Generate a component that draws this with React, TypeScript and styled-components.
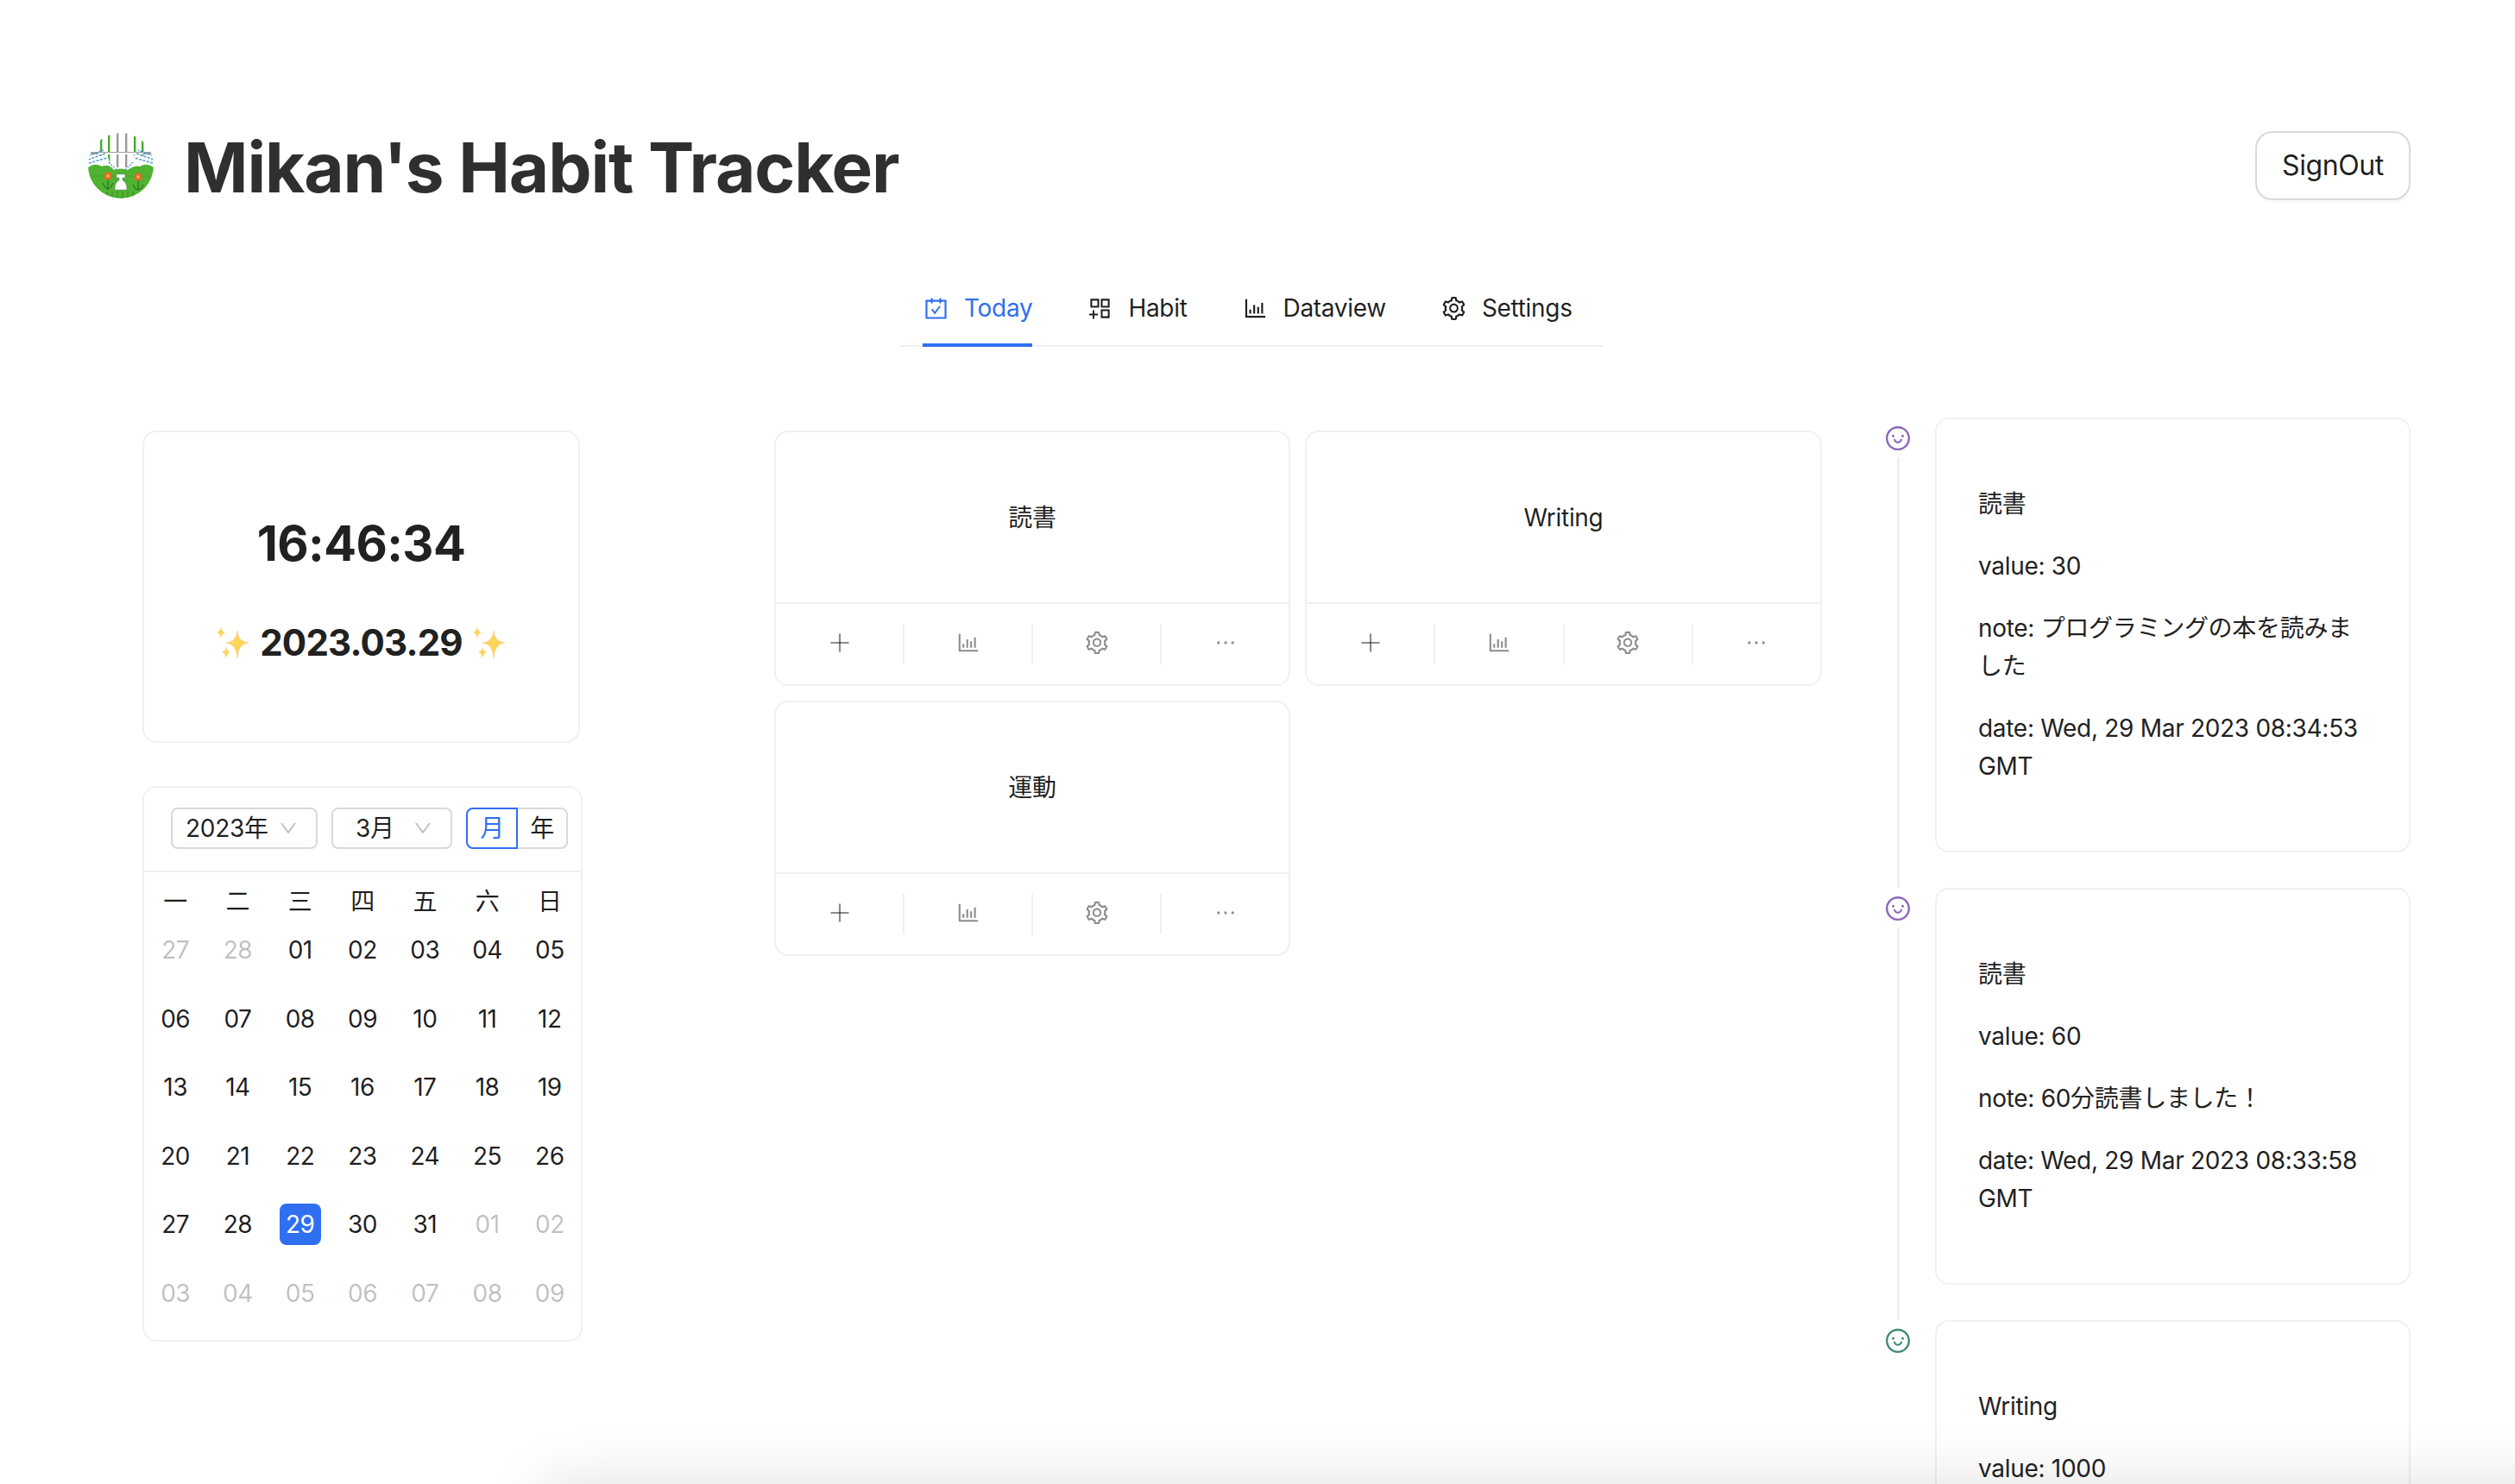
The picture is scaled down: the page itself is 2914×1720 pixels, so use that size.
import React from "react";
import styled, { createGlobalStyle } from "styled-components";
import {
  AiOutlineCarryOut,
  AiOutlineAppstoreAdd,
  AiOutlineBarChart,
  AiOutlineSetting,
  AiOutlineSmile,
  AiOutlinePlus,
  AiOutlineEllipsis,
  AiOutlineDown,
} from "react-icons/ai";

const Global = createGlobalStyle`
  html, body { margin: 0; padding: 0; height: 1720px; overflow: hidden; background: #fff; }
  * { box-sizing: border-box; }
  body {
    font-family: Inter, "Noto Sans CJK JP", "Noto Sans", sans-serif;
    font-size: 28px;
    line-height: 44px;
    letter-spacing: -0.3px;
    color: rgba(0, 0, 0, 0.88);
  }
`;

const BLUE = "#2f6ff2";
const LINE = "#f0f0f0";

const Page = styled.div`
  width: 2914px;
  height: 1720px;
  overflow: hidden;
`;
const Header = styled.header`
  display: flex;
  align-items: center;
  justify-content: space-between;
  padding: 152px 121px 0 102px;
`;
const Brand = styled.div`
  display: flex;
  align-items: center;
  gap: 35px;
`;
const Title = styled.h1`
  margin: 4px 0 0;
  font-size: 80px;
  line-height: 76px;
  font-weight: 700;
  letter-spacing: -1.15px;
  color: #2e3030;
  white-space: nowrap;
`;
const SignOut = styled.button`
  width: 180px;
  height: 80px;
  background: #fff;
  border: 2px solid #d9d9d9;
  border-radius: 20px;
  box-shadow: 0 4px 0 rgba(0, 0, 0, 0.02);
  font: inherit;
  font-size: 32px;
  letter-spacing: -0.4px;
  color: rgba(0, 0, 0, 0.88);
`;
const TabsRow = styled.div`
  display: flex;
  justify-content: center;
  padding: 0 121px 0 106px;
  margin-top: 79px;
`;
const TabsNav = styled.nav`
  display: flex;
  gap: 63px;
  width: 815px;
  padding-left: 27px;
  border-bottom: 2px solid ${LINE};
`;
const Tab = styled.div<{ $active?: boolean }>`
  position: relative;
  display: flex;
  align-items: center;
  gap: 17px;
  padding: 24px 0 21px;
  white-space: nowrap;
  color: ${(p) => (p.$active ? BLUE : "rgba(0,0,0,0.88)")};
  svg { font-size: 31px; }
  ${(p) =>
    p.$active &&
    `&::after { content: ""; position: absolute; left: 0; right: 0; bottom: -2px; height: 4px; background: ${BLUE}; }`}
`;
const Main = styled.main`
  display: flex;
  align-items: flex-start;
  margin-top: 82px;
  padding: 0 121px 0 165px;
`;
const LeftCol = styled.section`
  width: 510px;
  flex: none;
  margin-top: 15px;
`;
const ClockCard = styled.div`
  width: 507px;
  height: 362px;
  border: 2px solid ${LINE};
  border-radius: 16px;
  padding-top: 95px;
  text-align: center;
  color: #212121;
`;
const Time = styled.div`
  font-size: 56px;
  line-height: 68px;
  font-weight: 700;
  letter-spacing: -0.6px;
`;
const DateLine = styled.div`
  margin-top: 51px;
  display: flex;
  align-items: center;
  justify-content: center;
  gap: 12px;
  font-size: 42px;
  line-height: 60px;
  font-weight: 700;
  letter-spacing: -0.8px;
`;
const Calendar = styled.div`
  margin-top: 50px;
  height: 644px;
  border: 2px solid ${LINE};
  border-radius: 16px;
  font-family: Inter, "Noto Sans CJK SC", sans-serif;
`;
const CalHead = styled.div`
  display: flex;
  justify-content: flex-end;
  gap: 16px;
  height: 98px;
  padding: 23px 15px 0 0;
  border-bottom: 2px solid ${LINE};
`;
const Select = styled.div<{ $w: number; $center?: boolean }>`
  width: ${(p) => p.$w}px;
  height: 48px;
  display: flex;
  align-items: center;
  justify-content: space-between;
  padding: 0 20px 0 ${(p) => (p.$center ? 26 : 15)}px;
  border: 2px solid #d9d9d9;
  border-radius: 8px;
  line-height: 44px;
  svg { font-size: 24px; color: rgba(0, 0, 0, 0.25); }
`;
const Radio = styled.div`
  display: flex;
  height: 48px;
`;
const RadioOpt = styled.div<{ $on?: boolean }>`
  width: ${(p) => (p.$on ? 60 : 58)}px;
  text-align: center;
  line-height: 44px;
  border: 2px solid ${(p) => (p.$on ? BLUE : "#d9d9d9")};
  border-left-width: ${(p) => (p.$on ? 2 : 0)}px;
  border-radius: ${(p) => (p.$on ? "8px 0 0 8px" : "0 8px 8px 0")};
  color: ${(p) => (p.$on ? BLUE : "rgba(0,0,0,0.88)")};
`;
const WeekRow = styled.div`
  display: grid;
  grid-template-columns: repeat(7, 1fr);
  height: 66px;
  padding-top: 12px;
  text-align: center;
`;
const DateGrid = styled.div`
  display: grid;
  grid-template-columns: repeat(7, 1fr);
  grid-auto-rows: 79.5px;
`;
const DateCell = styled.div`
  display: flex;
  justify-content: center;
  align-items: flex-start;
`;
const DateNum = styled.span<{ $muted?: boolean; $sel?: boolean }>`
  width: 48px;
  height: 48px;
  line-height: 48px;
  text-align: center;
  border-radius: 8px;
  letter-spacing: -0.5px;
  background: ${(p) => (p.$sel ? BLUE : "transparent")};
  color: ${(p) => (p.$sel ? "#fff" : p.$muted ? "rgba(0,0,0,0.25)" : "rgba(0,0,0,0.88)")};
`;
const Habits = styled.section`
  flex: none;
  width: 1214px;
  margin: 15px 0 0 222px;
  display: grid;
  grid-template-columns: 598px 599px;
  column-gap: 17px;
  row-gap: 17px;
`;
const HabitCard = styled.article`
  height: 296px;
  border: 2px solid ${LINE};
  border-radius: 16px;
  display: flex;
  flex-direction: column;
`;
const HabitName = styled.div`
  flex: none;
  height: 197px;
  display: flex;
  align-items: center;
  justify-content: center;
`;
const Actions = styled.div`
  flex: 1;
  display: flex;
  align-items: center;
  border-top: 2px solid ${LINE};
`;
const Action = styled.div`
  flex: 1;
  height: 47px;
  display: flex;
  align-items: center;
  justify-content: center;
  color: rgba(0, 0, 0, 0.45);
  font-size: 30px;
  svg { margin-top: -4px; }
  &:not(:last-child) { border-right: 2px solid ${LINE}; }
`;
const Feed = styled.section`
  flex: none;
  width: 608px;
  margin-left: 74px;
`;
const FeedItem = styled.div`
  display: flex;
  gap: 29px;
`;
const Rail = styled.div`
  flex: none;
  width: 28px;
  display: flex;
  flex-direction: column;
  align-items: center;
  padding-top: 10px;
`;
const RailIcon = styled.div<{ $color: string }>`
  height: 28px;
  font-size: 32px;
  line-height: 28px;
  display: flex;
  align-items: center;
  justify-content: center;
  color: ${(p) => p.$color};
`;
const RailLine = styled.div`
  flex: 1;
  width: 3px;
  margin-top: 8px;
  background: ${LINE};
`;
const FeedBody = styled.div`
  width: 551px;
  padding-bottom: 41px;
`;
const FeedCard = styled.article`
  border: 2px solid ${LINE};
  border-radius: 16px;
  padding: 48px;
  color: #222;
  p { margin: 28px 0; }
`;
const BottomShadow = styled.div`
  position: fixed;
  left: 630px;
  right: -100px;
  top: 1720px;
  height: 100px;
  box-shadow: 0 0 70px rgba(0, 0, 0, 0.13);
`;

const Logo = () => (
  <svg width="76" height="76" viewBox="0 0 76 76">
    <defs>
      <clipPath id="logoClip">
        <circle cx="38" cy="38" r="38" />
      </clipPath>
    </defs>
    <g clipPath="url(#logoClip)">
      <rect width="76" height="76" fill="#fff" />
      {[14, 23, 33, 43, 53, 62].map((x, i) => (
        <rect key={x} x={x} y="0" width="2.4" height="40" fill={i === 2 || i === 3 ? "#9a9a9a" : "#4aa832"} />
      ))}
      <rect x="0" y="22" width="76" height="3" fill="#9f9f9f" />
      <rect x="12" y="23" width="52" height="2" fill="#fff" />
      <path d="M6 28 L22 25 L28 43 L8 42 Z M70 28 L54 25 L48 43 L68 42 Z" fill="#fff" />
      <path d="M0 27 L18 20 M0 31 L20 24 M1 35 L22 29 M76 27 L58 20 M76 31 L56 24 M75 35 L54 29" stroke="#4f9bd1" strokeWidth="1.6" strokeDasharray="3 1.5" fill="none" />
      <path d="M24 34 L34 44 M52 34 L42 44" stroke="#4f9bd1" strokeWidth="1.4" strokeDasharray="2 1.5" />
      <path d="M0 40 Q8 34 16 39 Q24 35 30 43 Q38 40 46 43 Q54 37 60 39 Q68 34 76 40 L76 76 L0 76 Z" fill="#4fb230" />
      <path d="M2 50 H74" stroke="#2f7d1f" strokeWidth="0.6" strokeDasharray="2 2" />
      <path d="M22 76 V68 M28 76 V68 M34 76 V68 M40 76 V68 M46 76 V68 M52 76 V68" stroke="#2f7d1f" strokeWidth="0.8" />
      <path d="M23 54 V66 M17 58 Q19 64 23 65 Q27 64 29 58 M58 55 V66 M52 60 Q54 66 58 66 Q62 66 64 60" stroke="#23621a" strokeWidth="1" fill="none" />
      <circle cx="23" cy="50" r="4.5" fill="#e4692c" />
      <circle cx="23" cy="50" r="1.8" fill="#f2c230" />
      <circle cx="58" cy="51" r="4.5" fill="#e4692c" />
      <circle cx="58" cy="51" r="1.8" fill="#f2c230" />
      <path d="M33 48 H43 V52 H40 V55 Q45 57 45 66 H31 Q31 57 36 55 V52 H33 Z" fill="#fff" stroke="#777" strokeWidth="0.5" />
    </g>
  </svg>
);

const Sparkles = () => (
  <svg width="38" height="38" viewBox="0 0 38 38">
    <path d="M24 5 Q25 18 37 19 Q25 20 24 37 Q23 20 11 19 Q23 18 24 5 Z" fill="#fdd55c" stroke="#fbbf6a" strokeWidth="0.5" />
    <path d="M5 0 Q5.6 6 10 7 Q5.6 8 5 15 Q4.4 8 0 7 Q4.4 6 5 0 Z" fill="#fdd55c" />
    <path d="M11 24 Q11.6 28.5 16 30 Q11.6 31 11 38 Q10.4 31 6 30 Q10.4 28.5 11 24 Z" fill="#fdd55c" />
  </svg>
);

const weeks = ["一", "二", "三", "四", "五", "六", "日"];
const pad = (n: number) => String(n).padStart(2, "0");
const cells: { label: string; muted?: boolean; sel?: boolean }[] = [
  { label: "27", muted: true },
  { label: "28", muted: true },
  ...Array.from({ length: 31 }, (_, i) => ({ label: pad(i + 1), sel: i === 28 })),
  ...Array.from({ length: 9 }, (_, i) => ({ label: pad(i + 1), muted: true })),
];

const habits = ["読書", "Writing", "運動"];

const logs = [
  {
    color: "#8a66ba",
    lines: ["読書", "value: 30", "note: プログラミングの本を読みました", "date: Wed, 29 Mar 2023 08:34:53 GMT"],
  },
  {
    color: "#8a66ba",
    lines: ["読書", "value: 60", "note: 60分読書しました！", "date: Wed, 29 Mar 2023 08:33:58 GMT"],
  },
  {
    color: "#3f8a76",
    lines: ["Writing", "value: 1000"],
  },
];

export default function App() {
  return (
    <Page>
      <Global />
      <Header>
        <Brand>
          <Logo />
          <Title>Mikan's Habit Tracker</Title>
        </Brand>
        <SignOut>SignOut</SignOut>
      </Header>
      <TabsRow>
        <TabsNav>
          <Tab $active><AiOutlineCarryOut />Today</Tab>
          <Tab><AiOutlineAppstoreAdd />Habit</Tab>
          <Tab><AiOutlineBarChart />Dataview</Tab>
          <Tab><AiOutlineSetting />Settings</Tab>
        </TabsNav>
      </TabsRow>
      <Main>
        <LeftCol>
          <ClockCard>
            <Time>16:46:34</Time>
            <DateLine><Sparkles />2023.03.29<Sparkles /></DateLine>
          </ClockCard>
          <Calendar>
            <CalHead>
              <Select $w={170}>2023年<AiOutlineDown /></Select>
              <Select $w={140} $center>3月<AiOutlineDown /></Select>
              <Radio>
                <RadioOpt $on>月</RadioOpt>
                <RadioOpt>年</RadioOpt>
              </Radio>
            </CalHead>
            <WeekRow>{weeks.map((w) => <div key={w}>{w}</div>)}</WeekRow>
            <DateGrid>
              {cells.map((c, i) => (
                <DateCell key={i}>
                  <DateNum $muted={c.muted} $sel={c.sel}>{c.label}</DateNum>
                </DateCell>
              ))}
            </DateGrid>
          </Calendar>
        </LeftCol>
        <Habits>
          {habits.map((h) => (
            <HabitCard key={h}>
              <HabitName>{h}</HabitName>
              <Actions>
                <Action><AiOutlinePlus /></Action>
                <Action><AiOutlineBarChart /></Action>
                <Action><AiOutlineSetting /></Action>
                <Action><AiOutlineEllipsis /></Action>
              </Actions>
            </HabitCard>
          ))}
        </Habits>
        <Feed>
          {logs.map((l, i) => (
            <FeedItem key={i}>
              <Rail>
                <RailIcon $color={l.color}><AiOutlineSmile /></RailIcon>
                {i < logs.length - 1 && <RailLine />}
              </Rail>
              <FeedBody>
                <FeedCard>
                  {l.lines.map((t) => <p key={t}>{t}</p>)}
                </FeedCard>
              </FeedBody>
            </FeedItem>
          ))}
        </Feed>
      </Main>
      <BottomShadow />
    </Page>
  );
}
